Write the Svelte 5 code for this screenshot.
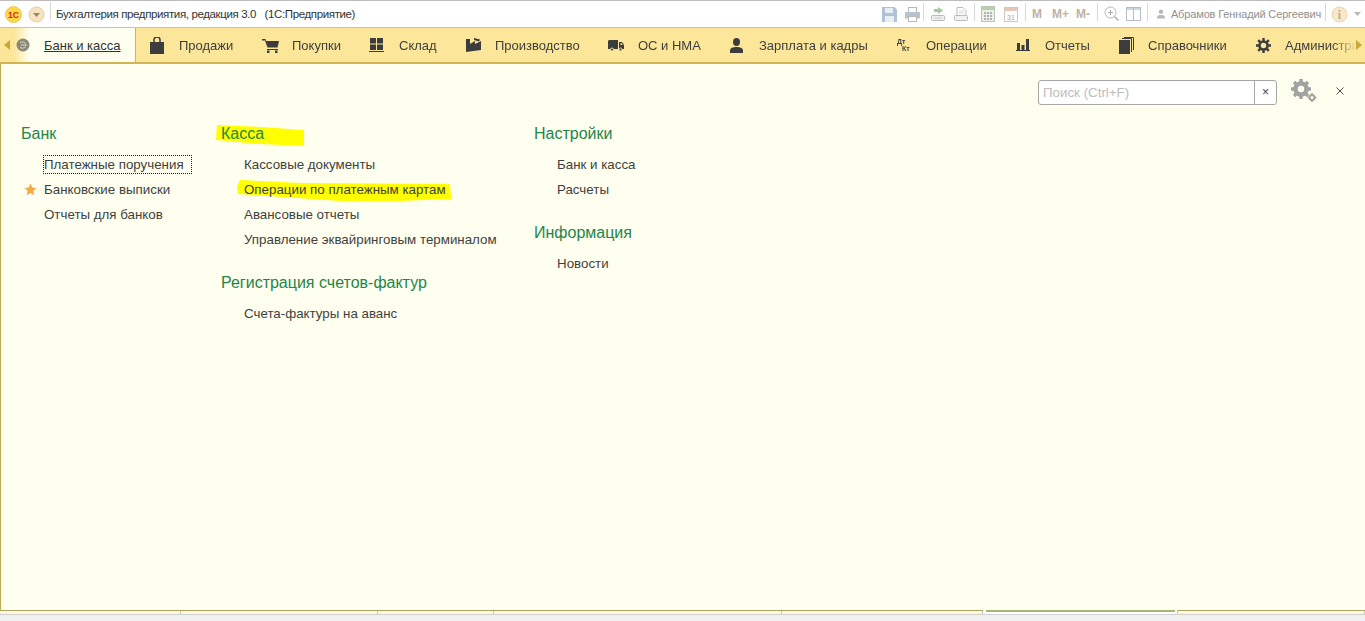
<script>
  const navItems = [
    { icon: 'bag', label: 'Продажи', w: 113 },
    { icon: 'cart', label: 'Покупки', w: 107 },
    { icon: 'grid', label: 'Склад', w: 96 },
    { icon: 'factory', label: 'Производство', w: 143 },
    { icon: 'truck', label: 'ОС и НМА', w: 121 },
    { icon: 'person', label: 'Зарплата и кадры', w: 167 },
    { icon: 'dtkt', label: 'Операции', w: 119 },
    { icon: 'chart', label: 'Отчеты', w: 103 },
    { icon: 'books', label: 'Справочники', w: 137 },
    { icon: 'gear', label: 'Администрирование', w: 300 }
  ];
  const flush = ['cart', 'grid', 'truck'];
  const columns = [
    { w: 200, groups: [{ title: 'Банк', items: [{ t: 'Платежные поручения', focus: true }, { t: 'Банковские выписки', star: true }, { t: 'Отчеты для банков' }] }] },
    { w: 313, groups: [
      { title: 'Касса', items: [{ t: 'Кассовые документы' }, { t: 'Операции по платежным картам' }, { t: 'Авансовые отчеты' }, { t: 'Управление эквайринговым терминалом' }] },
      { title: 'Регистрация счетов-фактур', items: [{ t: 'Счета-фактуры на аванс' }] }
    ] },
    { w: 300, groups: [
      { title: 'Настройки', items: [{ t: 'Банк и касса' }, { t: 'Расчеты' }] },
      { title: 'Информация', items: [{ t: 'Новости' }] }
    ] }
  ];
  const tabs = [181, 197, 116, 288, 201, 195, 187];
</script>

<div class="page">
  <header class="titlebar">
    <svg class="logo" width="17" height="17" viewBox="0 0 17 17">
      <circle cx="8.500" cy="8.500" r="8" fill="#fbd848" stroke="#eec765" />
      <text x="8.500" y="11.800" class="logo-text">1С</text>
    </svg>
    <svg class="menu-btn" width="17" height="17" viewBox="0 0 17 17">
      <circle cx="8.500" cy="8.500" r="7.500" fill="#f9e3bd" stroke="#dccdb0" />
      <path d="M5 7h7L8.500 11z" fill="#8f8778" />
    </svg>
    <span class="sep first"></span>
    <span class="app-title">Бухгалтерия предприятия, редакция 3.0&nbsp;&nbsp; (1С:Предприятие)</span>
    <div class="tools">
      <svg width="15" height="15" viewBox="0 0 15 15"><path d="M0 0h12.500L15 2.500V15H0z" fill="#9db4cc" /><rect x="3" y="1" width="8" height="5" fill="#e3ebf3" /><rect x="3" y="9" width="9" height="6" fill="#e3ebf3" /></svg>
      <svg class="ml8" width="15" height="15" viewBox="0 0 15 15"><rect x="3.500" y=".5" width="8" height="5" fill="#fff" stroke="#a6a6a6" /><rect x="0" y="5" width="15" height="6.500" rx="1" fill="#a7b3bf" /><rect x="3.500" y="9.500" width="8" height="5" fill="#fff" stroke="#a6a6a6" /></svg>
      <span class="sep a3"></span>
      <svg width="16" height="16" viewBox="0 0 16 16"><path d="M8 1v2H4v3h4v2l5-3.500z" fill="#8dbb8a" /><rect x="1.500" y="9.500" width="13" height="5" rx="1" fill="#eee" stroke="#aaa" /><path d="M4 12h8" stroke="#bbb" /></svg>
      <svg class="ml7" width="16" height="16" viewBox="0 0 16 16"><path d="M4 1.500h6l3 3v5H4z" fill="#fff" stroke="#aaa" /><path d="M6 5h5M6 7h5" stroke="#ccc" /><rect x="1.500" y="9.500" width="13" height="5" rx="1" fill="#eee" stroke="#aaa" /></svg>
      <span class="sep a5"></span>
      <svg width="14" height="16" viewBox="0 0 14 16"><rect x=".5" y=".5" width="13" height="15" fill="#e8efe0" stroke="#a9b8a2" /><rect x="1" y="1" width="12" height="3" fill="#a8c59a" /><path d="M3 6h2v2H3zM6 6h2v2H6zM9 6h2v2H9zM3 9h2v2H3zM6 9h2v2H6zM9 9h2v2H9zM3 12h2v2H3zM6 12h2v2H6zM9 12h2v2H9z" fill="#a0a0a0" /></svg>
      <svg class="ml9" width="14" height="16" viewBox="0 0 14 16"><rect x=".5" y="1.500" width="13" height="14" fill="#fff" stroke="#c9b8a8" /><rect x="1" y="2" width="12" height="3" fill="#e3b9a5" /><text x="7" y="13.500" class="cal">31</text></svg>
      <span class="sep a7"></span>
      <span class="mem">M</span><span class="mem ml10">M+</span><span class="mem ml7">M-</span>
      <span class="sep a7"></span>
      <svg width="15" height="16" viewBox="0 0 15 16"><circle cx="6.500" cy="6.500" r="5.500" fill="#fff" stroke="#a3a3a3" /><path d="M6.500 4v5M4 6.500h5" stroke="#8f8f8f" /><path d="M10.500 10.500l4 4" stroke="#9a9a9a" stroke-width="1.500" /></svg>
      <svg class="ml7" width="15" height="16" viewBox="0 0 15 16"><rect x=".5" y="1.500" width="14" height="13" fill="#fff" stroke="#9fb0bf" /><rect x="1" y="2" width="13" height="2" fill="#bfd0df" /><path d="M7.500 2v12" stroke="#9fb0bf" /></svg>
      <span class="sep"></span>
      <svg class="user-ico" width="10" height="10" viewBox="0 0 11 11"><circle cx="5.500" cy="3" r="2.500" fill="#a8a8a8" /><path d="M1 10.500c0-3.500 2-4 4.500-4s4.500.5 4.500 4z" fill="#a8a8a8" /></svg>
      <span class="user">Абрамов Геннадий Сергеевич</span>
      <span class="sep last"></span>
      <svg class="info" width="17" height="17" viewBox="0 0 17 17"><circle cx="8.500" cy="8.500" r="7.500" fill="#f8e2bb" stroke="#e5c99a" /><text x="8.500" y="12.500" class="info-i">i</text></svg>
      <svg class="caret" width="7" height="4" viewBox="0 0 7 4"><path d="M0 0h7L3.500 4z" fill="#a9a9a9" /></svg>
    </div>
  </header>

  <nav class="navbar">
    <div class="nav-active">
      <svg class="arrow-left" width="6" height="10" viewBox="0 0 6 10"><path d="M6 0v10L0 5z" fill="#c9a73d" /></svg>
      <svg class="active-ico" width="14" height="14" viewBox="0 0 14 14"><circle cx="7" cy="7" r="6.500" fill="#8a8877" /><path d="M4 4.500c3-1.500 6 0 6 2.500s-3 4-6 2.500M5 7h4" fill="none" stroke="#e4dfc4" /></svg>
      <span class="active-label">Банк и касса</span>
    </div>
    <div class="nav-list">
      {#each navItems as item}
        <div class="nav-item" style="width:{item.w}px">
          <span class="nav-ico" class:flush={flush.includes(item.icon)}>
            {#if item.icon === 'bag'}
              <svg width="14" height="17" viewBox="0 0 14 17"><path d="M0 5h14v12H0z" fill="#3c3c3c" /><path d="M4 6V3a3 3 0 0 1 6 0v3" fill="none" stroke="#3c3c3c" stroke-width="1.500" /></svg>
            {:else if item.icon === 'cart'}
              <svg width="17" height="15" viewBox="0 0 17 15"><path d="M0 1h3.500l.5 2h13l-1.500 6.500H5.500L3 2.500H0z" fill="#3c3c3c" /><path d="M5 11h11v1H5z" fill="#3c3c3c" /><rect x="5" y="12.500" width="2.500" height="2.500" fill="#3c3c3c" /><rect x="13" y="12.500" width="2.500" height="2.500" fill="#3c3c3c" /></svg>
            {:else if item.icon === 'grid'}
              <svg width="15" height="14" viewBox="0 0 15 14"><path d="M1 0h6v5.500H1zM8 0h6v5.500H8zM1 6.500h6V12H1zM8 6.500h6V12H8zM0 13h15v1H0z" fill="#3c3c3c" /></svg>
            {:else if item.icon === 'factory'}
              <svg width="15" height="14" viewBox="0 0 15 14"><path d="M0 14V1h4v5l5-3v3l6-3v9z" fill="#3c3c3c" /><path d="M8 0l6 1.500-1 2L8 2z" fill="#3c3c3c" /></svg>
            {:else if item.icon === 'truck'}
              <svg width="16" height="11" viewBox="0 0 16 11"><path d="M1 0h9v9H0V1z" fill="#3c3c3c" /><path d="M11 2h3l2 3v4h-5z" fill="#3c3c3c" /><path d="M12.500 3.200h1.200l1 1.800h-2.200z" fill="#fbe69a" /><circle cx="4" cy="9.500" r="1.500" fill="#3c3c3c" stroke="#fbe69a" /><circle cx="12.500" cy="9.500" r="1.500" fill="#3c3c3c" stroke="#fbe69a" /></svg>
            {:else if item.icon === 'person'}
              <svg width="13" height="15" viewBox="0 0 13 15"><ellipse cx="6.500" cy="4" rx="3.500" ry="4" fill="#3c3c3c" /><path d="M0 15v-2.500C0 10 3 9 6.500 9s6.500 1 6.500 3.500V15z" fill="#3c3c3c" /></svg>
            {:else if item.icon === 'dtkt'}
              <span class="dtkt"><b>Дт</b><b class="kt">Кт</b></span>
            {:else if item.icon === 'chart'}
              <svg width="14" height="12" viewBox="0 0 14 12"><path d="M1 4h3v7H1zM5.500 6h3v5h-3zM10 0h3v11h-3zM0 11h14v1H0z" fill="#3c3c3c" /></svg>
            {:else if item.icon === 'books'}
              <svg width="15" height="17" viewBox="0 0 15 17"><path d="M0 3h11v14H0z" fill="#3c3c3c" /><path d="M3 1.500h9.500V15M5 .5h9.500V13" fill="none" stroke="#3c3c3c" /></svg>
            {:else}
              <svg width="15" height="15" viewBox="0 0 15 15"><circle cx="7.500" cy="7.500" r="4" fill="none" stroke="#3c3c3c" stroke-width="2.500" /><path d="M7.500 0v3M7.500 12v3M0 7.500h3M12 7.500h3M2.200 2.200l2 2M10.800 10.800l2 2M2.200 12.800l2-2M10.800 4.200l2-2" stroke="#3c3c3c" stroke-width="2.400" /></svg>
            {/if}
          </span>
          <span class="nav-label">{item.label}</span>
        </div>
      {/each}
    </div>
    <div class="nav-end">
      <svg width="6" height="10" viewBox="0 0 6 10"><path d="M0 0v10l6-5z" fill="#c9a73d" /></svg>
    </div>
  </nav>

  <main class="content">
    <svg class="marker" width="500" height="90" viewBox="0 0 500 90" aria-hidden="true">
      <path d="M217 1 L260 3 L304 6 L304 22 L260 20 L216 16 Z" fill="#ffff00" />
      <path d="M240 56 L300 59 L450 60 L451 75 L400 77 L340 77 L238 70 L237 63 Z" fill="#ffff00" />
    </svg>

    <div class="search-row">
      <div class="search">
        <span class="placeholder">Поиск (Ctrl+F)</span>
        <span class="clear">×</span>
      </div>
      <svg class="settings" width="28" height="24" viewBox="0 0 28 24">
        <g stroke="#a2a2a2" fill="none">
          <circle cx="11" cy="10" r="5.500" stroke-width="4.500" />
          <path d="M11 0v4M11 16v4M1 10h4M17 10h4M4 3l3 3M15 14l3 3M4 17l3-3M15 6l3-3" stroke-width="3.400" />
          <circle cx="22" cy="18.500" r="2.500" stroke-width="2" />
          <path d="M22 14v2M22 21v2M17.500 18.500h2M24.500 18.500h2" stroke-width="1.600" />
        </g>
      </svg>
      <svg class="close" width="8" height="8" viewBox="0 0 8 8"><path d="M.5.5l7 7M7.500.5l-7 7" stroke="#4a4a4a" stroke-width="1" /></svg>
    </div>

    <div class="columns">
      {#each columns as col}
        <section class="column" style="width:{col.w}px">
          {#each col.groups as group}
            <div class="group">
              <h2>{group.title}</h2>
              <ul>
                {#each group.items as item}
                  <li>
                    {#if item.star}
                      <svg class="star" width="13" height="13" viewBox="0 0 13 13"><path d="M6.500.5l1.800 4 4.200.5-3.100 2.900.8 4.300-3.700-2.100-3.700 2.100.8-4.300L.5 5l4.200-.5z" fill="#f5a94a" /></svg>
                    {/if}
                    <span class:focus={item.focus}>{item.t}</span>
                  </li>
                {/each}
              </ul>
            </div>
          {/each}
        </section>
      {/each}
    </div>
  </main>

  <div class="tabs">
    {#each tabs as w, i}
      <div class="tab" class:current={i === 5} style="width:{w}px"></div>
    {/each}
  </div>
</div>

<style>
  :global(body) {
    margin: 0;
    background: #f0f0f0;
  }
  .page {
    height: 621px;
    width: 1365px;
    overflow: hidden;
    display: flex;
    flex-direction: column;
    font-family: "Liberation Sans", Arial, sans-serif;
    color: #3f3f3f;
  }
  .titlebar {
    flex: none;
    box-sizing: border-box;
    border-top: 1px solid #bcbcbc;
    border-bottom: 1px solid #c4c4c4;
    height: 28px;
    background: #fff;
    display: flex;
    align-items: center;
    padding-left: 5px;
  }
  .logo-text {
    font: bold 8.500px "Liberation Sans", sans-serif;
    fill: #d8261c;
    text-anchor: middle;
  }
  .menu-btn {
    margin-left: 6px;
  }
  .sep {
    width: 1px;
    height: 18px;
    background: #d8d8d8;
    margin: -4px 6px 0;
    flex: none;
  }
  .sep.a3 { margin-left: 3px; }
  .sep.a5 { margin-left: 5px; }
  .sep.a7 { margin-left: 7px; }
  .sep.last { margin-left: 4px; margin-right: 5px; }
  .sep.first {
    margin: -6px 0 0 5px;
  }
  .app-title {
    font-size: 11.500px;
    letter-spacing: -0.37px;
    margin-left: 5px;
    color: #333;
    white-space: nowrap;
  }
  .tools {
    margin-left: auto;
    display: flex;
    align-items: center;
    padding-right: 4px;
    color: #b2a89e;
  }
  .tools > svg {
    opacity: 0.8;
    flex: none;
  }
  .ml7 { margin-left: 7px; }
  .ml8 { margin-left: 8px; }
  .ml9 { margin-left: 9px; }
  .ml10 { margin-left: 10px; }
  .cal {
    font: 7px "Liberation Sans", sans-serif;
    fill: #888;
    text-anchor: middle;
  }
  .mem {
    font-size: 12px;
    font-weight: bold;
    color: #c3b0a0;
  }
  .user-ico { margin-left: 2px; }
  .user {
    font-size: 11px;
    letter-spacing: -0.14px;
    color: #909090;
    margin-left: 5px;
    white-space: nowrap;
  }
  .info-i {
    font: bold 12px "Liberation Serif", serif;
    fill: #a89878;
    text-anchor: middle;
  }
  .caret { margin-left: 6px; }
  .navbar {
    height: 36px;
    flex: none;
    display: flex;
    background: #fbe69a;
    border-bottom: 2px solid #d3b455;
    box-sizing: border-box;
  }
  .nav-active {
    width: 136px;
    flex: none;
    box-sizing: border-box;
    border-right: 1px solid #d3b455;
    background: linear-gradient(90deg, #fbe69a 0, #fbe69a 14px, #fffff0 30px);
    display: flex;
    align-items: center;
    padding-left: 4px;
    font-size: 13px;
  }
  .active-ico { margin-left: 6px; }
  .active-label {
    margin-left: 14px;
    text-decoration: underline;
    color: #333;
  }
  .nav-list {
    display: flex;
    flex: none;
    width: 1220px;
    overflow: hidden;
    padding-left: 13px;
    box-sizing: border-box;
    -webkit-mask-image: linear-gradient(90deg, #000 calc(100% - 24px), transparent 100%);
    mask-image: linear-gradient(90deg, #000 calc(100% - 24px), transparent 100%);
  }
  .nav-item {
    display: flex;
    align-items: center;
    flex: none;
    font-size: 13px;
    color: #3f3f3f;
    white-space: nowrap;
  }
  .nav-ico {
    width: 29px;
    padding-left: 1px;
    flex: none;
    display: flex;
    align-items: center;
  }
  .nav-ico.flush {
    padding-left: 0;
    width: 30px;
  }
  .dtkt {
    display: flex;
    flex-direction: column;
    font-size: 7px;
    line-height: 7px;
    color: #3c3c3c;
  }
  .dtkt .kt { margin-left: 5px; }
  .nav-end {
    flex: none;
    display: flex;
    align-items: center;
  }
  .content {
    flex: none;
    height: 547px;
    box-sizing: border-box;
    background: #ffffef;
    border-left: 1px solid #b9ae55;
    border-bottom: 1px solid #a9a36a;
    position: relative;
  }
  .marker {
    position: absolute;
    left: -1px;
    top: 60px;
  }
  .search-row {
    display: flex;
    justify-content: flex-end;
    align-items: center;
    padding: 16px 21px 0 0;
    height: 25px;
  }
  .search {
    width: 239px;
    height: 25px;
    box-sizing: border-box;
    background: #fff;
    border: 1px solid #a6a6a6;
    border-radius: 3px;
    display: flex;
    align-items: center;
    font-size: 13.330px;
  }
  .placeholder {
    flex: 1;
    padding-left: 4px;
    color: #bdbdbd;
  }
  .clear {
    width: 21px;
    height: 23px;
    line-height: 23px;
    text-align: center;
    border-left: 1px solid #a6a6a6;
    color: #444;
    font-size: 12px;
  }
  .settings {
    margin-left: 13px;
    margin-top: -3px;
  }
  .close {
    margin-left: 18px;
    margin-top: -3px;
  }
  .columns {
    display: flex;
    padding: 16px 0 0 20px;
    position: relative;
  }
  .column {
    flex: none;
  }
  h2 {
    margin: 0;
    font-weight: normal;
    font-size: 16px;
    line-height: 26px;
    color: #23854b;
  }
  ul {
    list-style: none;
    margin: 5px 0 18px;
    padding: 0;
  }
  li {
    height: 25px;
    line-height: 25px;
    font-size: 13.330px;
    padding-left: 23px;
    position: relative;
    color: #3f3f3f;
    white-space: nowrap;
  }
  .focus {
    outline: 1px dotted #222;
    padding: 1px 7px 1px 0;
  }
  .star {
    position: absolute;
    left: 3px;
    top: 6px;
  }
  .tabs {
    flex: none;
    height: 4px;
    box-sizing: border-box;
    border-bottom: 1px solid #d0d0d0;
    display: flex;
    background: #fdf9d8;
  }
  .tab {
    flex: none;
    box-sizing: border-box;
    border-right: 1px solid #c8c8c8;
  }
  .tab.current {
    background: linear-gradient(#a6b673, #a6b673) 3px 0 / 189px 2px no-repeat, #fff;
    margin-top: -1px;
    position: relative;
  }
</style>
